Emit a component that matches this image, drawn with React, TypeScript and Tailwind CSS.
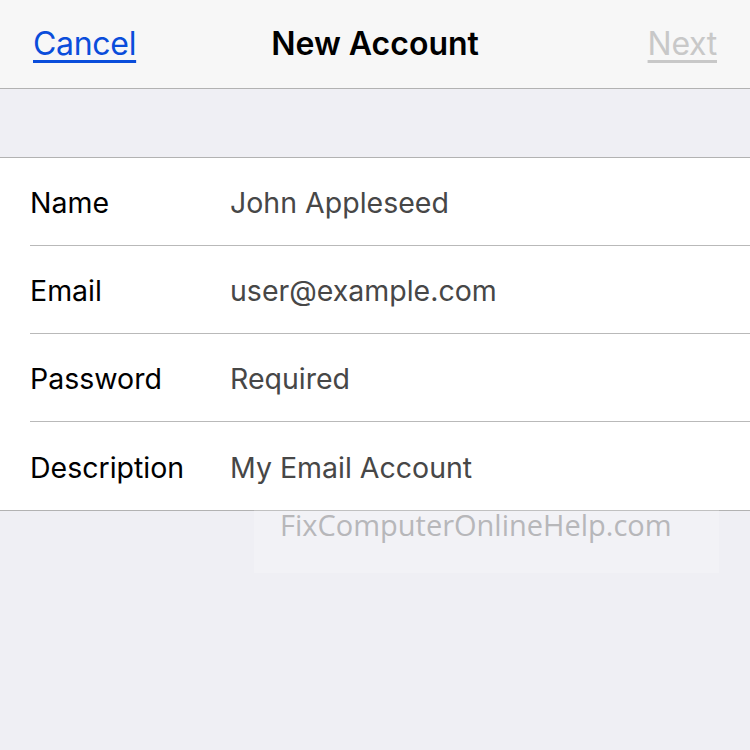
const rows = [
  { label: "Name", value: "John Appleseed" },
  { label: "Email", value: "user@example.com" },
  { label: "Password", value: "Required" },
  { label: "Description", value: "My Email Account" },
];

const App = () => {
  return (
    <div className="relative w-[750px] h-[750px] bg-[#efeff4] font-['Inter',sans-serif] overflow-hidden">
      <div className="grid grid-cols-[1fr_auto_1fr] items-center h-[89px] px-[33px] bg-[#f7f7f7] border-b border-[#b2b2b2]">
        <div>
          <a href="#" className="text-[32px] text-[#0a4ddb] underline underline-offset-[5px] decoration-[3px] tracking-[-0.3px]">
            Cancel
          </a>
        </div>
        <h1 className="text-[32px] font-semibold text-black">New Account</h1>
        <div className="text-right">
          <a href="#" className="text-[32px] text-[#c8c8c8] underline underline-offset-[5px] decoration-[3px] tracking-[-0.3px]">
            Next
          </a>
        </div>
      </div>
      <div className="h-[68px]" />
      <div className="bg-white border-y border-[#b2b2b2] pl-[30px]">
        {rows.map((row, i) => (
          <div
            key={row.label}
            className={`flex items-center h-[88px] pt-[4px] text-[28.5px] ${i < rows.length - 1 ? "border-b border-[#b9b9b9]" : ""}`}
          >
            <span className="w-[200px] text-black">{row.label}</span>
            <span className="text-[#474747]">{row.value}</span>
          </div>
        ))}
      </div>
      <div className="absolute left-[254px] top-[486px] w-[465px] h-[87px] bg-white/20 flex pt-[19px] pl-[26px]">
        <span className="font-['Open_Sans',sans-serif] text-[29px] leading-[40px] text-[#b7b7ba]">
          FixComputerOnlineHelp.com
        </span>
      </div>
    </div>
  );
};

export default App;
